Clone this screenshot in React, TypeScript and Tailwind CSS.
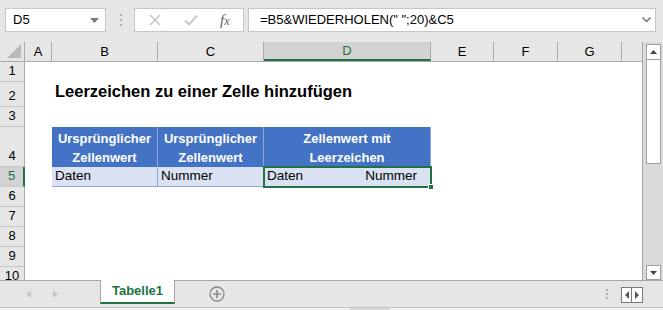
import { useState } from "react";

const cols = [
  { key: "A", w: "w-[27px]" },
  { key: "B", w: "w-[106px]" },
  { key: "C", w: "w-[106px]" },
  { key: "D", w: "w-[167px]" },
  { key: "E", w: "w-[63px]" },
  { key: "F", w: "w-[64px]" },
  { key: "G", w: "w-[64px]" },
];

const rows = [
  { n: 1, h: "h-[20px]" },
  { n: 2, h: "h-[25px]" },
  { n: 3, h: "h-[20px]" },
  { n: 4, h: "h-[40px]" },
  { n: 5, h: "h-[20px]" },
  { n: 6, h: "h-[20px]" },
  { n: 7, h: "h-[20px]" },
  { n: 8, h: "h-[20px]" },
  { n: 9, h: "h-[20px]" },
  { n: 10, h: "h-[20px]" },
];

const App = () => {
  const [selected] = useState("D5");

  const cellContent = (row: number, col: string) => {
    if (row === 2 && col === "B") {
      return (
        <div className="absolute left-[3px] bottom-[3px] whitespace-nowrap text-[16.5px] font-bold text-black">
          Leerzeichen zu einer Zelle hinzufügen
        </div>
      );
    }
    if (row === 4 && ["B", "C", "D"].includes(col)) {
      const text =
        col === "D"
          ? ["Zellenwert mit", "Leerzeichen"]
          : ["Ursprünglicher", "Zellenwert"];
      return (
        <div className="flex h-full flex-col items-center justify-center bg-[#4472c4] border-r border-[#8ea9db] pt-[2px] text-[13px] font-bold leading-[19px] text-white">
          <span>{text[0]}</span>
          <span>{text[1]}</span>
        </div>
      );
    }
    if (row === 5 && ["B", "C", "D"].includes(col)) {
      return (
        <div className="flex h-full items-center justify-between border-r border-b border-[#8ea9db] bg-[#d9e1f2] px-[3px] text-[13.5px] text-black">
          {col === "B" && <span>Daten</span>}
          {col === "C" && <span>Nummer</span>}
          {col === "D" && (
            <>
              <span>Daten</span>
              <span className="pr-[10px]">Nummer</span>
            </>
          )}
        </div>
      );
    }
    return null;
  };

  return (
    <div
      className="flex h-[310px] w-[663px] flex-col overflow-hidden bg-[#e6e6e6] text-[13px] text-[#222]"
      style={{ fontFamily: '"Liberation Sans", Arial, sans-serif' }}
    >
      {/* Formula bar */}
      <div className="flex h-[42px] shrink-0 items-start pt-[8px]">
        <div className="ml-[5px] flex h-[24px] w-[101px] items-center justify-between border border-[#c6c6c6] bg-white pl-[7px] pr-[6px]">
          <span className="text-[13px] text-black">{selected}</span>
          <svg width="9" height="5" viewBox="0 0 9 5">
            <path d="M0 0 H9 L4.5 5 Z" fill="#7a7a7a" />
          </svg>
        </div>
        <div className="ml-[14px] mr-[12px] flex h-[24px] flex-col items-center justify-center gap-[3px]">
          <span className="h-[2px] w-[2px] bg-[#b0b0b0]" />
          <span className="h-[2px] w-[2px] bg-[#b0b0b0]" />
          <span className="h-[2px] w-[2px] bg-[#b0b0b0]" />
        </div>
        <div className="flex h-[24px] w-[110px] items-center border border-[#c6c6c6] bg-white">
          <svg width="12" height="12" viewBox="0 0 12 12" className="ml-[14px]">
            <path d="M1 1 L11 11 M11 1 L1 11" stroke="#c2c2c2" strokeWidth="1.4" />
          </svg>
          <svg width="14" height="12" viewBox="0 0 14 12" className="ml-[23px]">
            <path d="M1 6.5 L5 10.5 L13 1.5" stroke="#c2c2c2" strokeWidth="1.8" fill="none" />
          </svg>
          <span
            className="ml-[22px] text-[15px] italic text-[#606060]"
            style={{ fontFamily: '"Liberation Serif", serif' }}
          >
            f<span className="text-[12px]">x</span>
          </span>
        </div>
        <div className="ml-[4px] flex h-[24px] w-[408px] items-center justify-between border border-[#c6c6c6] bg-white pl-[11px] pr-[4px]">
          <span className="whitespace-pre text-[13px] text-black">
            =B5&amp;WIEDERHOLEN(" ";20)&amp;C5
          </span>
          <svg width="9" height="6" viewBox="0 0 9 6">
            <path d="M0.5 0.5 L4.5 4.5 L8.5 0.5" stroke="#707070" strokeWidth="1.5" fill="none" />
          </svg>
        </div>
      </div>

      {/* Sheet + vertical scrollbar */}
      <div className="flex h-[238px] shrink-0">
        <div className="relative w-[643px] shrink-0 overflow-hidden border-r border-[#a6a6a6]">
          {/* Column headers */}
          <div className="flex h-[20px] border-b border-[#ababab]">
            <div className="relative w-[25px] shrink-0 border-r border-[#ababab]">
              <svg width="14" height="14" viewBox="0 0 14 14" className="absolute right-[3px] bottom-[3px]">
                <path d="M14 0 V14 H0 Z" fill="#b9b9b9" />
              </svg>
            </div>
            {cols.map((c) => (
              <div
                key={c.key}
                className={`${c.w} flex shrink-0 items-center justify-center border-r border-[#ababab] text-[13px] ${
                  c.key === "D"
                    ? "border-b-2 border-b-[#217346] bg-[#d2d2d2] text-[#217346]"
                    : "text-black"
                }`}
              >
                {c.key}
              </div>
            ))}
            <div className="flex-1" />
          </div>

          {/* Rows */}
          {rows.map((r) => (
            <div key={r.n} className={`${r.h} flex shrink-0`}>
              <div
                className={`flex w-[25px] shrink-0 items-end justify-center border-b border-[#c8c8c8] pb-[1px] text-[13px] ${
                  r.n === 5
                    ? "border-r-2 border-r-[#217346] bg-[#d2d2d2] text-[#217346]"
                    : "border-r border-r-[#ababab] text-black"
                }`}
              >
                {r.n}
              </div>
              <div className="flex flex-1 bg-white">
                {cols.map((c) => (
                  <div key={c.key} className={`${c.w} relative shrink-0`}>
                    {cellContent(r.n, c.key)}
                  </div>
                ))}
              </div>
            </div>
          ))}

          {/* Selection of D5 */}
          <div className="pointer-events-none absolute left-[263px] top-[124px] h-[22px] w-[169px] border-2 border-[#217346]" />
          <div className="pointer-events-none absolute left-[428px] top-[142px] h-[6px] w-[6px] border border-white bg-[#217346]" />
        </div>

        {/* Vertical scrollbar */}
        <div className="flex flex-1 flex-col items-center bg-[#dadada] pt-[2px]">
          <div className="flex h-[16px] w-[15px] items-center justify-center border border-[#a0a0a0] bg-white">
            <svg width="7" height="4" viewBox="0 0 7 4">
              <path d="M0 4 H7 L3.5 0 Z" fill="#444" />
            </svg>
          </div>
          <div className="h-[104px] w-[15px] border border-t-0 border-[#a0a0a0] bg-white" />
          <div className="flex-1" />
          <div className="flex h-[15px] w-[15px] items-center justify-center border border-[#a0a0a0] bg-white">
            <svg width="7" height="4" viewBox="0 0 7 4">
              <path d="M0 0 H7 L3.5 4 Z" fill="#444" />
            </svg>
          </div>
        </div>
      </div>

      {/* Sheet tabs */}
      <div className="flex h-[27px] shrink-0 items-stretch border-t border-[#a6a6a6]">
        <div className="flex w-[100px] items-center gap-[22px] pl-[26px]">
          <svg width="5" height="8" viewBox="0 0 5 8">
            <path d="M5 0 V8 L0 4 Z" fill="#c8c8c8" />
          </svg>
          <svg width="5" height="8" viewBox="0 0 5 8">
            <path d="M0 0 V8 L5 4 Z" fill="#c8c8c8" />
          </svg>
        </div>
        <div className="-mt-px flex h-[24px] w-[75px] items-center justify-center border-x border-[#a6a6a6] border-b-2 border-b-[#217346] bg-white text-[13px] font-bold text-[#217346]">
          Tabelle1
        </div>
        <div className="flex items-center pl-[34px]">
          <svg width="16" height="16" viewBox="0 0 16 16">
            <circle cx="8" cy="8" r="7" fill="none" stroke="#8a8a8a" strokeWidth="1.3" />
            <path d="M8 4 V12 M4 8 H12" stroke="#8a8a8a" strokeWidth="1.6" />
          </svg>
        </div>
        <div className="flex-1" />
        <div className="flex flex-col items-center justify-center gap-[2px] pr-[13px]">
          <span className="h-[2px] w-[2px] bg-[#b0b0b0]" />
          <span className="h-[2px] w-[2px] bg-[#b0b0b0]" />
          <span className="h-[2px] w-[2px] bg-[#b0b0b0]" />
        </div>
        <div className="mb-[6px] mt-[6px] flex h-[16px] items-stretch border border-[#7a7a7a] bg-white">
          <div className="flex w-[10px] items-center justify-center border-r border-[#7a7a7a]">
            <svg width="4" height="8" viewBox="0 0 4 8">
              <path d="M4 0 V8 L0 4 Z" fill="#555" />
            </svg>
          </div>
          <div className="flex w-[10px] items-center justify-center">
            <svg width="4" height="8" viewBox="0 0 4 8">
              <path d="M0 0 V8 L4 4 Z" fill="#555" />
            </svg>
          </div>
        </div>
        <div className="w-[20px]" />
      </div>
      <div className="flex h-[3px] shrink-0 border-t border-[#c6c6c6] bg-[#f0f0f0]">
        <div className="ml-[350px] w-[40px] bg-[#d6d6d6]" />
      </div>
    </div>
  );
};

export default App;
